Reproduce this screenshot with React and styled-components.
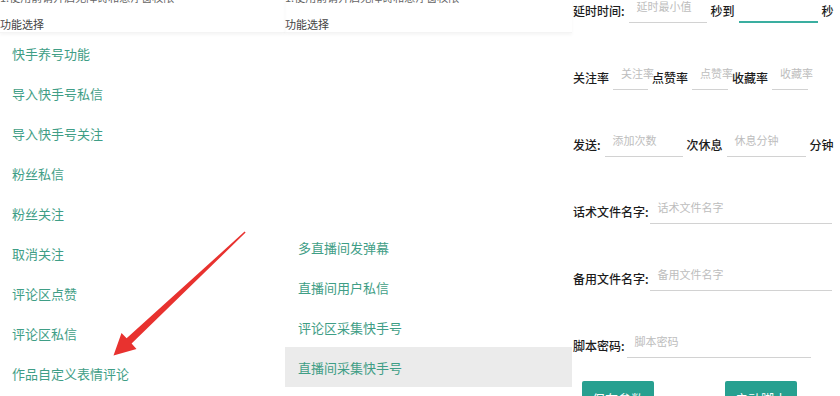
import React from 'react'
import styled, { createGlobalStyle } from 'styled-components'

const GlobalStyle = createGlobalStyle`
  html, body {
    margin: 0;
    padding: 0;
    background: #fff;
  }
  body {
    font-family: "Noto Sans CJK SC", "Noto Sans", sans-serif;
  }
`

const leftItems = [
  '快手养号功能',
  '导入快手号私信',
  '导入快手号关注',
  '粉丝私信',
  '粉丝关注',
  '取消关注',
  '评论区点赞',
  '评论区私信',
  '作品自定义表情评论',
]

const middleItems = ['多直播间发弹幕', '直播间用户私信', '评论区采集快手号', '直播间采集快手号']

const Page = styled.div`
  position: relative;
  width: 840px;
  height: 396px;
  overflow: hidden;
  display: grid;
  grid-template-columns: 285px 287px 268px;
`

const Panel = styled.div`
  display: flex;
  flex-direction: column;
  min-width: 0;
`

const Header = styled.div`
  height: 33px;
  box-shadow: 0 2px 3px rgba(0, 0, 0, 0.04);
  border-bottom: 1px solid #f4f4f4;
  box-sizing: border-box;
`

const Notice = styled.div`
  margin-top: -11px;
  font-size: 11px;
  line-height: 16px;
  color: #666;
  white-space: nowrap;
`

const HeaderTitle = styled.div`
  margin-top: 11px;
  font-size: 11px;
  line-height: 16px;
  color: #444;
`

const List = styled.div`
  display: flex;
  flex-direction: column;
  padding-top: ${p => p.top || 0}px;
`

const Item = styled.div`
  height: 40px;
  display: flex;
  align-items: center;
  padding-left: ${p => p.pad}px;
  font-size: 13px;
  color: #3f9e86;
  background: ${p => (p.active ? '#ebebeb' : 'transparent')};
`

const Form = styled.div`
  display: flex;
  flex-direction: column;
  gap: 41px;
  margin-top: -3px;
  padding-left: 1px;
`

const Row = styled.div`
  display: flex;
  align-items: center;
  gap: ${p => p.gap || 4}px;
  height: 26px;
`

const Label = styled.span`
  font-size: 12px;
  font-weight: 500;
  color: #1c1c1c;
  white-space: nowrap;
`

const Field = styled.div`
  position: relative;
  box-sizing: border-box;
  height: 26px;
  width: ${p => (p.w ? `${p.w}px` : 'auto')};
  flex: ${p => (p.w ? 'none' : '1')};
  margin-right: ${p => p.mr || 0}px;
  padding-left: 8px;
  border-bottom: ${p => (p.focus ? '2px solid #3aaea0' : '1.5px solid #d2d2d2')};
`

const Placeholder = styled.span`
  display: block;
  font-size: 11px;
  line-height: 18px;
  color: #bdbdbd;
  white-space: nowrap;
`

const Buttons = styled.div`
  display: flex;
  gap: 71px;
  margin-top: 23px;
  padding-left: 10px;
`

const Button = styled.button`
  width: 72px;
  height: 34px;
  border: none;
  border-radius: 2px;
  background: #27a090;
  color: #fff;
  font-family: inherit;
  font-size: 13px;
  padding: 0;
`

const Arrow = styled.svg`
  position: absolute;
  left: 0;
  top: 0;
  pointer-events: none;
`

const Input = ({ w, mr, focus, text }) => (
  <Field w={w} mr={mr} focus={focus}>
    {text && <Placeholder>{text}</Placeholder>}
  </Field>
)

export default function App() {
  return (
    <>
      <GlobalStyle />
      <Page>
        <Panel>
          <Header>
            <Notice>1.使用前请开启无障碍和悬浮窗权限</Notice>
            <HeaderTitle>功能选择</HeaderTitle>
          </Header>
          <List>
            {leftItems.map(t => (
              <Item key={t} pad={12}>{t}</Item>
            ))}
          </List>
        </Panel>

        <Panel>
          <Header>
            <Notice>1.使用前请开启无障碍和悬浮窗权限</Notice>
            <HeaderTitle>功能选择</HeaderTitle>
          </Header>
          <List top={194}>
            {middleItems.map((t, i) => (
              <Item key={t} pad={13} active={i === middleItems.length - 1}>{t}</Item>
            ))}
          </List>
        </Panel>

        <Panel>
          <Form>
            <Row>
              <Label>延时时间:</Label>
              <Input w={78} text="延时最小值" />
              <Label>秒到</Label>
              <Input w={79} focus />
              <Label>秒</Label>
            </Row>
            <Row>
              <Label>关注率</Label>
              <Input w={35} text="关注率" />
              <Label>点赞率</Label>
              <Input w={36} text="点赞率" />
              <Label>收藏率</Label>
              <Input w={36} text="收藏率" />
            </Row>
            <Row>
              <Label>发送:</Label>
              <Input w={78} text="添加次数" />
              <Label>次休息</Label>
              <Input w={79} text="休息分钟" />
              <Label>分钟</Label>
            </Row>
            <Row gap={1}>
              <Label>话术文件名字:</Label>
              <Input mr={8} text="话术文件名字" />
            </Row>
            <Row gap={1}>
              <Label>备用文件名字:</Label>
              <Input mr={8} text="备用文件名字" />
            </Row>
            <Row gap={2}>
              <Label>脚本密码:</Label>
              <Input w={184} text="脚本密码" />
            </Row>
          </Form>
          <Buttons>
            <Button>保存参数</Button>
            <Button>启动脚本</Button>
          </Buttons>
        </Panel>

        <Arrow width="840" height="396" viewBox="0 0 840 396">
          <polygon
            points="245.6,232.6 131.6,343.6 136.5,349 113.5,355.5 121.5,333 126.6,338.3 244.6,231.6"
            fill="#e8322f"
          />
        </Arrow>
      </Page>
    </>
  )
}
